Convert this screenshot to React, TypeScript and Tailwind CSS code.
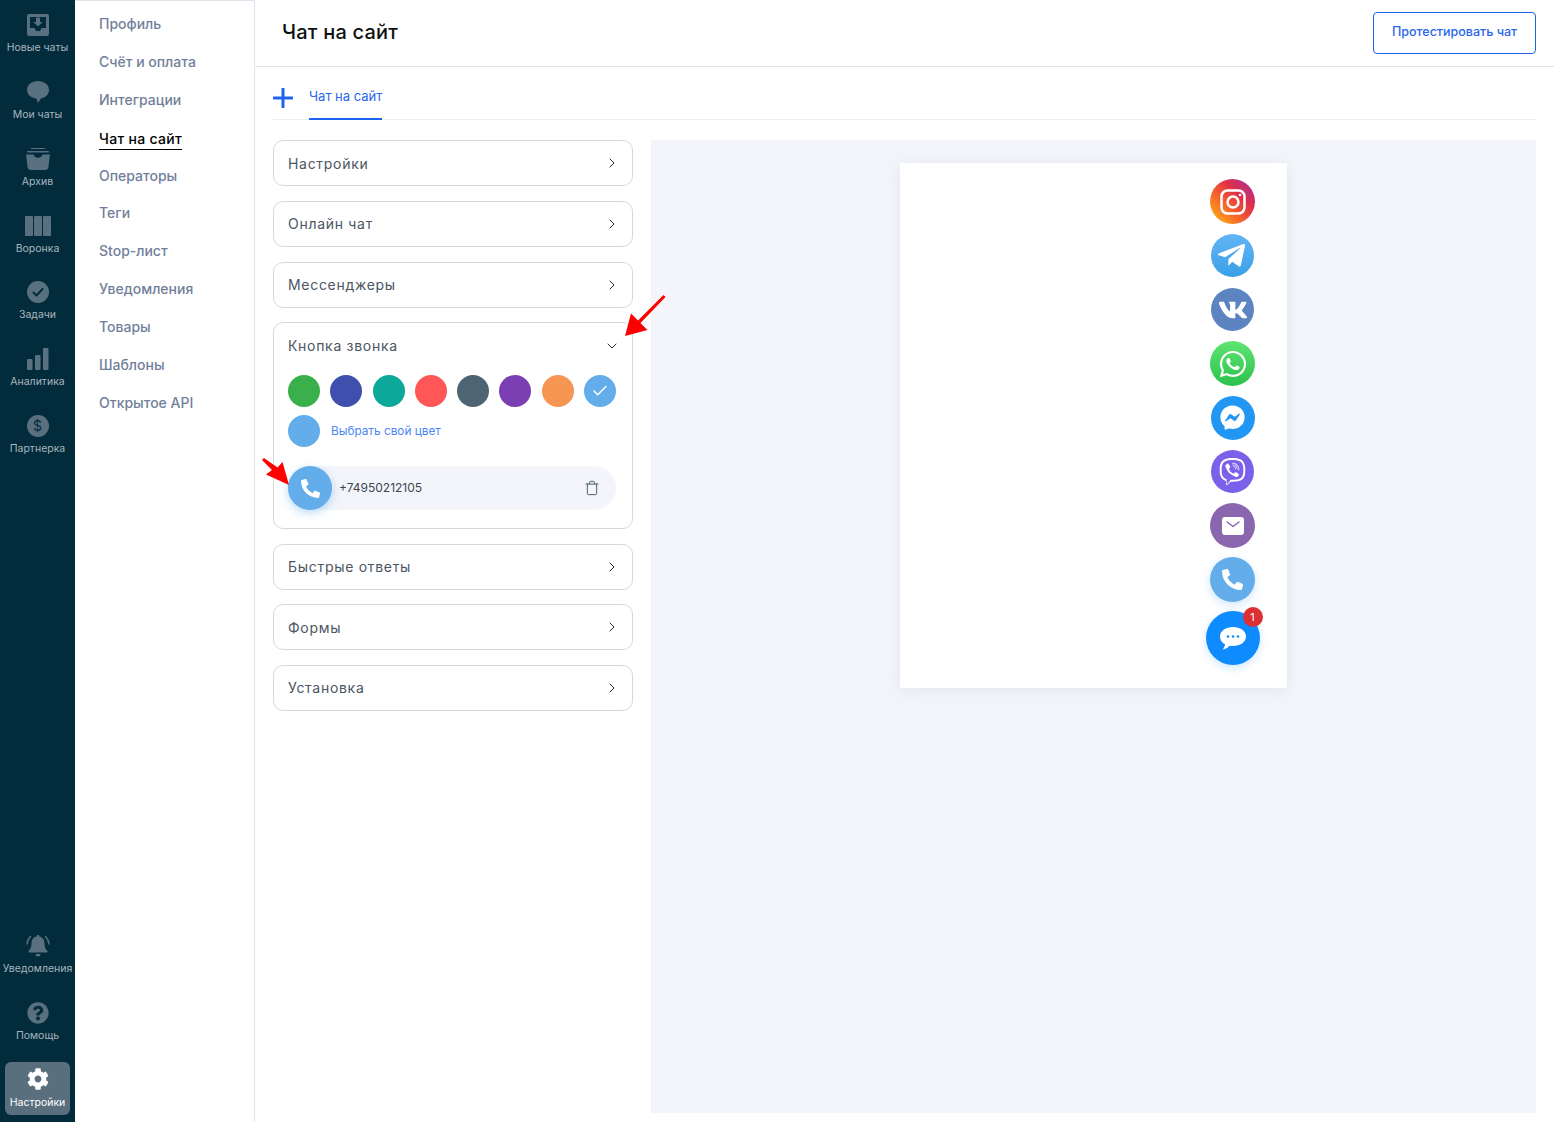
import React from 'react';
import { FaCog, FaQuestionCircle, FaTelegramPlane, FaVk, FaWhatsapp, FaFacebookMessenger, FaViber, FaPhoneAlt } from 'react-icons/fa';
import { ChevronRight, ChevronDown, Trash, Check } from 'lucide-react';

const Inbox = () => (
    <svg viewBox="0 0 22 22" className="w-[22px] h-[22px]" fill="currentColor">
        <path fillRule="evenodd" d="M2 0h18a2 2 0 0 1 2 2v18a2 2 0 0 1-2 2H2a2 2 0 0 1-2-2V2a2 2 0 0 1 2-2zm1 3v11h4.500l1.500 3h4l1.500-3H19V3H3zm6 .5h4V8h2.600L11 12.600 6.400 8H9V3.500z" />
    </svg>
);

const Bubble = () => (
    <svg viewBox="0 0 22 22" className="w-[22px] h-[22px]" fill="currentColor">
        <path d="M11 0c6 0 11 3.600 11 8.800 0 4.700-3.800 8-8 8.700-1 1.400-2 3-3.200 4.500-.3-1.600-.8-3.100-1.500-4.500C4 17.100 0 13.600 0 8.800 0 3.600 5 0 11 0z" />
    </svg>
);

const Archive = () => (
    <svg viewBox="0 0 24 22" className="w-6 h-[22px]" fill="currentColor">
        <rect x="5" y="0" width="14" height="1" rx=".5" />
        <rect x="1" y="3" width="22" height="1.500" rx=".7" />
        <path d="M0 6.500h7.500c.5 2 2.200 3.300 4.500 3.300s4-1.300 4.500-3.300H24l-1.600 13A2.800 2.800 0 0 1 19.600 22H4.400a2.800 2.800 0 0 1-2.800-2.500L0 6.500z" />
    </svg>
);

const Columns = () => (
    <svg viewBox="0 0 26 20" className="w-[26px] h-5" fill="currentColor">
        <rect x="0" y="0" width="8" height="20" rx="1" />
        <rect x="9" y="0" width="8" height="20" rx="1" />
        <rect x="18" y="0" width="8" height="20" rx="1" />
    </svg>
);

const Tasks = () => (
    <svg viewBox="0 0 22 22" className="w-[22px] h-[22px]">
        <circle cx="11" cy="11" r="11" fill="currentColor" />
        <path d="M6.500 11.500l3 3 6-6.500" fill="none" stroke="#022b3c" strokeWidth="2" strokeLinecap="round" strokeLinejoin="round" />
    </svg>
);

const Bars = () => (
    <svg viewBox="0 0 22 22" className="w-[22px] h-[22px]" fill="currentColor">
        <rect x="0" y="11" width="5.500" height="11" rx="1" />
        <rect x="8" y="7" width="5.500" height="15" rx="1" />
        <rect x="16" y="0" width="5.500" height="22" rx="1" />
    </svg>
);

const Dollar = () => (
    <span className="w-[22px] h-[22px] rounded-full bg-[#587080] flex items-center justify-center text-[14px] leading-none text-[#022b3c]">$</span>
);

const RingingBell = () => (
    <svg viewBox="0 0 24 22" className="w-6 h-[22px]" fill="currentColor">
        <path d="M12 0a1.500 1.500 0 0 1 1.500 1.600c3.200.7 5 3.300 5 6.400 0 4.500 1.200 6 2.800 7.800.5.600.1 1.700-.8 1.700h-17c-.9 0-1.300-1.100-.8-1.700C4.300 14 5.500 12.500 5.500 8c0-3.100 1.800-5.700 5-6.400A1.500 1.500 0 0 1 12 0zM9.500 19h5a2.500 2.500 0 0 1-5 0z" />
        <path d="M4.500 1.500C2.500 3.500 1.200 6 1 9M19.500 1.500c2 2 3.300 4.500 3.500 7.500" fill="none" stroke="currentColor" strokeWidth="1.500" strokeLinecap="round" />
    </svg>
);

const navItems = [
    { label: 'Новые чаты', icon: <Inbox /> },
    { label: 'Мои чаты', icon: <Bubble /> },
    { label: 'Архив', icon: <Archive /> },
    { label: 'Воронка', icon: <Columns /> },
    { label: 'Задачи', icon: <Tasks /> },
    { label: 'Аналитика', icon: <Bars /> },
    { label: 'Партнерка', icon: <Dollar /> },
];

const NavItem: React.FC<{ label: string; icon: React.ReactNode }> = ({ label, icon }) => (
    <div className="h-[66.850px] flex flex-col items-center pt-[14px]">
        <div className="h-[22px] flex items-center justify-center text-[#587080]">{icon}</div>
        <span className="mt-[5px] text-[10.500px] leading-[13px] whitespace-nowrap text-[#a9b6be]">{label}</span>
    </div>
);

const settingsLinks = ['Профиль', 'Счёт и оплата', 'Интеграции', 'Чат на сайт', 'Операторы', 'Теги', 'Stop-лист', 'Уведомления', 'Товары', 'Шаблоны', 'Открытое API'];

const swatches = ['#39b04b', '#3f4fae', '#0ca899', '#ff5757', '#4f6472', '#7b3fb3', '#f79552'];

const Accordion: React.FC<{ title: string }> = ({ title }) => (
    <div className="h-[46px] shrink-0 rounded-[10px] border border-[#d8d8d8] pl-[14px] pr-[12px] flex items-center justify-between">
        <span className="text-[14px] tracking-[0.7px] text-[#4b5563]">{title}</span>
        <ChevronRight className="w-4 h-4 text-[#1f2b38]" strokeWidth={1.5} />
    </div>
);

const RedArrow: React.FC<{ className: string; d: string; size: number }> = ({ className, d, size }) => (
    <svg viewBox={`0 0 ${size} ${size}`} width={size} height={size} className={className} fill="#ff0000">
        <path d={d} />
    </svg>
);

const Round: React.FC<{ className: string; children: React.ReactNode }> = ({ className, children }) => (
    <div className="h-[45px] flex items-center justify-center">
        <div className={`rounded-full flex items-center justify-center text-white ${className}`}>{children}</div>
    </div>
);

export default function App() {
    return (
        <div className="h-screen w-full flex bg-white overflow-hidden font-['Inter','Open_Sans',sans-serif]">
            {/* тёмная панель */}
            <aside className="w-[75px] shrink-0 bg-[#022b3c] flex flex-col justify-between pb-[7px]">
                <div className="flex flex-col">
                    {navItems.map((item) => (
                        <NavItem key={item.label} {...item} />
                    ))}
                </div>
                <div className="flex flex-col">
                    <div className="mb-[7px]">
                        <NavItem label="Уведомления" icon={<RingingBell />} />
                        <NavItem label="Помощь" icon={<FaQuestionCircle className="w-[22px] h-[22px]" />} />
                    </div>
                    <div className="mx-[5px] h-[53px] rounded-[6px] bg-[#5a6f7d] flex flex-col items-center pt-[6px]">
                        <FaCog className="w-[22px] h-[22px] text-white" />
                        <span className="mt-[6px] text-[10.500px] leading-[13px] text-white">Настройки</span>
                    </div>
                </div>
            </aside>

            {/* настройки */}
            <nav className="w-[180px] shrink-0 border-r border-t border-[#dfe4ec] pl-[24px] pt-[13px] flex flex-col gap-[17.900px]">
                {settingsLinks.map((link) =>
                    link === 'Чат на сайт' ? (
                        <span key={link} className="relative top-[1px] self-start text-[14px] leading-[20px] tracking-[0.3px] font-medium text-black border-b border-black -mb-[1px]">{link}</span>
                    ) : (
                        <span key={link} className="text-[14px] leading-[20px] font-medium text-[#71809a]">{link}</span>
                    )
                )}
            </nav>

            <main className="flex-1 min-w-0 flex flex-col">
                <header className="h-[67px] shrink-0 border-b border-[#dfe4ec] pl-[27px] pr-[18px] flex items-center justify-between">
                    <h1 className="text-[20px] font-medium tracking-[0.2px] text-[#111] relative -top-[1px]">Чат на сайт</h1>
                    <button className="w-[163px] h-[42px] mb-[1px] rounded-[4px] border border-[#1e62f0] text-[12.500px] font-medium text-[#2a66f0]">Протестировать чат</button>
                </header>

                <div className="flex-1 flex flex-col px-[18px] pb-[9px] min-h-0">
                    <div className="h-[53px] shrink-0 border-b border-[#eceef2] flex items-end">
                        <svg viewBox="0 0 20 20" className="w-5 h-5 mb-[11px] mr-[16px]" fill="none" stroke="#1e62f0" strokeWidth="3" strokeLinecap="round">
                            <path d="M10 1v18M1 10h18" />
                        </svg>
                        <div className="h-[53px] border-b-2 border-[#1e62f0] -mb-[1px] pt-[20px] text-[13px] leading-[18px] text-[#2a66f0]">Чат на сайт</div>
                    </div>

                    <div className="flex-1 min-h-0 flex gap-[18px] pt-[20px]">
                        <div className="w-[360px] shrink-0 pt-[0.450px] flex flex-col gap-[14.550px]">
                            <Accordion title="Настройки" />
                            <Accordion title="Онлайн чат" />
                            <Accordion title="Мессенджеры" />

                            <div className="relative h-[207px] shrink-0 rounded-[10px] border border-[#d8d8d8] pl-[14px] pr-[16px]">
                                <div className="h-[45px] -mr-[4px] flex items-center justify-between">
                                    <span className="text-[14px] tracking-[0.7px] text-[#4b5563]">Кнопка звонка</span>
                                    <ChevronDown className="w-4 h-4 text-[#1f2b38]" strokeWidth={1.5} />
                                </div>
                                <div className="mt-[7px] flex justify-between">
                                    {swatches.map((color) => (
                                        <div key={color} className="w-8 h-8 rounded-full" style={{ backgroundColor: color }} />
                                    ))}
                                    <div className="w-8 h-8 rounded-full bg-[#62adea] flex items-center justify-center">
                                        <Check className="w-[18px] h-[18px] text-white" strokeWidth={2} />
                                    </div>
                                </div>
                                <div className="mt-2 flex items-center gap-[11px]">
                                    <div className="w-8 h-8 rounded-full bg-[#62adea]" />
                                    <span className="relative top-[1px] text-[11.800px] text-[#4a86f5]">Выбрать свой цвет</span>
                                </div>
                                <div className="mt-[19px] h-11 rounded-full bg-[#f3f5fa] flex items-center pr-[16px]">
                                    <div className="w-11 h-11 rounded-full bg-[#62adea] shadow-[0_3px_10px_rgba(98,173,234,0.45)] flex items-center justify-center">
                                        <FaPhoneAlt className="w-[19px] h-[19px] text-white" />
                                    </div>
                                    <span className="ml-[7px] flex-1 text-[12px] text-[#3c4650]">+74950212105</span>
                                    <Trash className="w-4 h-4 text-[#4f5e6e]" strokeWidth={1.5} />
                                </div>
                                <RedArrow className="absolute -top-[28px] -right-[34px]" size={41} d="M38.500 0l2 2-25 26 7 7L0 41l6-22.500 7 7z" />
                                <RedArrow className="absolute top-[135px] -left-[12px]" size={27} d="M2 0L0 2l10 10-6 4.500L27 27 20.500 4l-5 5.500z" />
                            </div>

                            <Accordion title="Быстрые ответы" />
                            <Accordion title="Формы" />
                            <Accordion title="Установка" />
                        </div>

                        {/* превью */}
                        <div className="flex-1 min-w-0 bg-[#f3f5fa] flex justify-center pt-[23px]">
                            <div className="w-[387px] h-[525px] mr-[1px] bg-white shadow-[0_2px_14px_rgba(120,140,170,0.15)] flex justify-end pr-[27px] pt-[16px]">
                                <div className="w-[54px] flex flex-col gap-[9px]">
                                    <Round className="w-[45px] h-[45px] bg-[linear-gradient(45deg,#fdb515_5%,#f5602c_40%,#e02f4a_65%,#9b2fa5_100%)]">
                                        <svg viewBox="0 0 30 30" className="w-[30px] h-[30px]" fill="none" stroke="currentColor" strokeWidth="2.500">
                                            <rect x="3.500" y="3.500" width="23" height="23" rx="6" />
                                            <circle cx="15" cy="15" r="5.500" />
                                            <circle cx="22" cy="8" r="1.300" fill="currentColor" stroke="none" />
                                        </svg>
                                    </Round>
                                    <Round className="w-[43px] h-[43px] bg-[linear-gradient(180deg,#62b5f5,#3a9fe8)]">
                                        <FaTelegramPlane className="w-[31px] h-[31px] -translate-x-[1px]" />
                                    </Round>
                                    <Round className="w-[43px] h-[43px] bg-[#5b84c0]">
                                        <FaVk className="w-[30px] h-[30px]" />
                                    </Round>
                                    <Round className="w-[45px] h-[45px] bg-[linear-gradient(180deg,#5fe472,#2bc24c)]">
                                        <FaWhatsapp className="w-[30px] h-[30px]" />
                                    </Round>
                                    <Round className="w-[44px] h-[44px] bg-[#2196f3]">
                                        <FaFacebookMessenger className="w-[25px] h-[25px]" />
                                    </Round>
                                    <Round className="w-[43px] h-[43px] bg-[#7b61ea]">
                                        <FaViber className="w-[27px] h-[27px]" />
                                    </Round>
                                    <Round className="w-[45px] h-[45px] bg-[#8a66ae]">
                                        <svg viewBox="0 0 22 18" className="w-[22px] h-[18px]">
                                            <rect width="22" height="18" rx="3" fill="#fff" />
                                            <path d="M5 5l6 4.500L17 5" fill="none" stroke="#8a66ae" strokeWidth="1.500" strokeLinecap="round" strokeLinejoin="round" />
                                        </svg>
                                    </Round>
                                    <Round className="w-[45px] h-[45px] bg-[#62adea] shadow-[0_3px_10px_rgba(98,173,234,0.3)]">
                                        <FaPhoneAlt className="w-[21px] h-[21px]" />
                                    </Round>
                                    <div className="relative w-[54px] h-[54px] rounded-full bg-[#0d8bff] shadow-[0_3px_10px_rgba(13,139,255,0.2)] flex items-center justify-center">
                                        <svg viewBox="0 0 28 26" className="w-7 h-[26px]">
                                            <path d="M14 2c7 0 13 3.800 13 9.500S21 21 14 21c-1.100 0-2.200-.1-3.200-.3C9 22.500 6.500 24 3.500 24.500c1.200-1.300 2.200-3 2.600-5C3 17.800 1 15 1 11.500 1 5.800 7 2 14 2z" fill="#fff" />
                                            <circle cx="9" cy="11.500" r="1.300" fill="#0d8bff" />
                                            <circle cx="14" cy="11.500" r="1.300" fill="#0d8bff" />
                                            <circle cx="19" cy="11.500" r="1.300" fill="#0d8bff" />
                                        </svg>
                                        <span className="absolute -top-[4px] -right-[3px] w-5 h-5 rounded-full bg-[#dc3034] flex items-center justify-center text-[11px] text-white">1</span>
                                    </div>
                                </div>
                            </div>
                        </div>
                    </div>
                </div>
            </main>
        </div>
    );
}
